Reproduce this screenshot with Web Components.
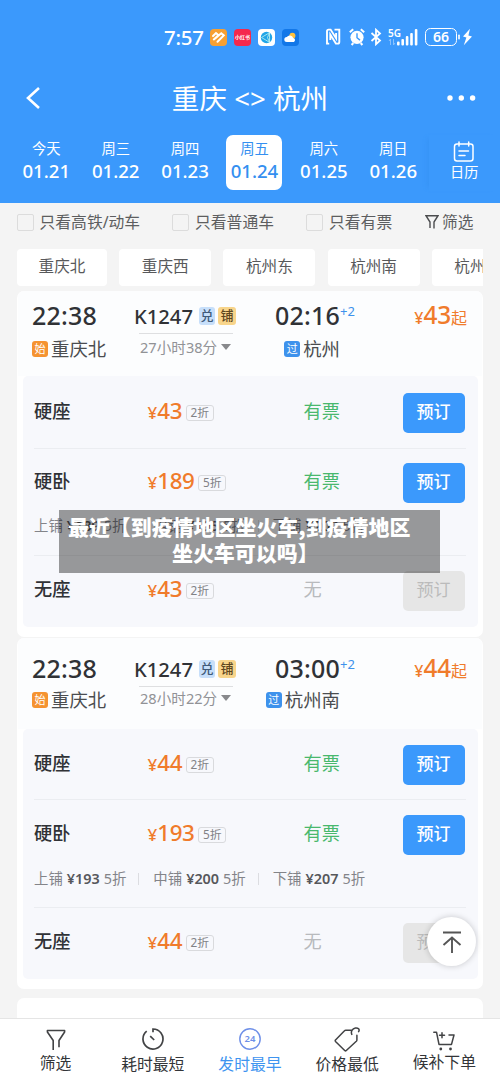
<!DOCTYPE html>
<html lang="zh-CN">
<head>
<meta charset="utf-8">
<title>重庆 - 杭州</title>
<style>
html,body{margin:0;height:1083px;overflow:hidden}
body{font-family:"Noto Sans","Noto Sans CJK SC",sans-serif;background:#f4f4f4;color:#303236}
</style>
</head>
<body>
<train-app></train-app>
<script>
const BASE = `*{box-sizing:border-box}svg{display:block;flex:none}span{white-space:nowrap}`;
function define(name, html, init) {
  const t = document.createElement('template');
  t.innerHTML = html.replace('<style>', '<style>' + BASE);
  customElements.define(name, class extends HTMLElement {
    constructor() {
      super();
      this.attachShadow({mode: 'open'});
    }
    connectedCallback() {
      if (this.shadowRoot.childNodes.length) return;
      const frag = t.content.cloneNode(true);
      frag.querySelectorAll('[data-t]').forEach(e => { e.textContent = this.getAttribute(e.dataset.t) || ''; });
      if (init) init(this, frag);
      this.shadowRoot.append(frag);
    }
  });
}

define('status-bar', `<style>
:host{display:flex;height:74px;padding-left:164px;align-items:center;color:#fff}
.time{width:46px;font-size:20.4px;line-height:26px;letter-spacing:-.2px;font-weight:500}
.app{width:17px;height:17px;border-radius:4px;margin-right:7px;flex:none;overflow:hidden}
.red{background:#f5284d;font-size:5px;line-height:17px;text-align:center;font-weight:700}
.net{display:grid;width:13px;font-size:10px;line-height:10px;font-weight:600;height:19px;flex:none}
.bat{width:32px;height:18px;border:1.5px solid #fff;border-radius:5.5px;font-size:14px;line-height:15px;font-weight:600;text-align:center;flex:none}
</style>
<span class="time">7:57</span>
<svg class="app" viewBox="0 0 17 17"><rect width="17" height="17" fill="#f7a033"/><path d="M3 7l3-3 2.5 2.2M5.2 9.4l6-5.2 2.6 2.2-6.3 6.4M7.8 6.8l-4 3.6" fill="none" stroke="#fff" stroke-width="2" stroke-linecap="round"/></svg>
<span class="app red">小红书</span>
<svg class="app" viewBox="0 0 17 17"><rect width="17" height="17" fill="#fff"/><circle cx="8.5" cy="8.5" r="5.7" fill="#21a5e8"/><path d="M3.5 8.5l8-4.8v9.6zM11.5 3.7l-2 4.8 2 4.8" fill="none" stroke="#c3f4ef" stroke-width=".8"/></svg>
<svg class="app" style="margin-right:26px" viewBox="0 0 17 17"><rect width="17" height="17" fill="#1277e8"/><circle cx="10.4" cy="6.8" r="3" fill="#ffc13c"/><path d="M4.8 13a2.5 2.5 0 010-5 3.6 3.6 0 016.4 1 2.1 2.1 0 01.6 4z" fill="#fff"/></svg>
<svg width="40" height="18" viewBox="0 0 40 18" fill="none" stroke="#fff"><path d="M4.2 15.6H2V3.2Q2 1.6 3.6 1.6h2l5.5 8.6V5M5.3 12V6.6l5.6 9h1.8q1.6 0 1.6-1.6V1.6H9.5" stroke-width="1.9"/><circle cx="32" cy="9.3" r="6.6" fill="#fff" stroke="none"/><path d="M24.8 4.2l3.4-3M39.2 4.2l-3.4-3M26.6 17l1.7-2M37.4 17l-1.7-2" stroke-width="2"/><path d="M32 5.3v4.4l3 2.4" stroke="#3b99fc" stroke-width="1.4"/></svg>
<svg width="12" height="18" viewBox="0 0 12 18" style="margin-left:5px;margin-right:6px" fill="none" stroke="#fff" stroke-width="1.8"><path d="M1.5 5l8.5 7.5L6 16.2V1.8l4 3.7L1.5 13"/></svg>
<span class="net"><span>5G</span><svg width="10" height="8" viewBox="0 0 10 8" opacity=".4" stroke="#fff" fill="none"><path d="M2.5 7V1L1 3M5.5 1v6L7 5"/></svg></span>
<svg width="21" height="18" viewBox="0 0 21 18" fill="#fff" style="margin-left:-4px;margin-right:7px"><rect y="13.5" width="2.6" height="4" rx="1"/><rect x="4.4" y="11" width="2.6" height="6.5" rx="1"/><rect x="8.8" y="8" width="2.6" height="9.5" rx="1"/><rect x="13.2" y="5" width="2.6" height="12.5" rx="1"/><rect x="17.8" y="1" width="2.6" height="16.5" rx="1"/></svg>
<span class="bat">66</span>
<svg width="16" height="18" viewBox="0 0 16 18" fill="#fff"><rect x="1.2" y="6.5" width="1.6" height="5" rx=".7"/><path d="M13 .8L6 8.6l3.4 1L6.8 17.2 15 8.4l-3.6-1z"/></svg>`);

define('title-bar', `<style>
:host{display:grid;grid-template-columns:100px 1fr 100px;height:48px;align-items:center;color:#fff}
svg.b{margin-left:24px}
span{font-size:27.6px;line-height:40px;text-align:center}
svg.m{justify-self:end;margin-right:24px}
</style>
<svg class="b" width="18" height="24" viewBox="0 0 18 24" fill="none" stroke="#fff" stroke-width="2.6"><path d="M15 2L4 12l11 10"/></svg>
<span><slot></slot></span>
<svg class="m" width="30" height="8" viewBox="0 0 30 8" fill="#fff"><circle cx="4" cy="4" r="2.7"/><circle cx="15.3" cy="4" r="2.7"/><circle cx="26.6" cy="4" r="2.7"/></svg>`);

define('date-tab', `<style>
:host{display:grid;width:56px;height:55px;margin-right:13.4px;padding-top:3px;border-radius:7px;text-align:center;color:#fff;grid-template-rows:21px 23px;flex:none}
:host([selected]){background:#fff;color:#348ff0}
.d{font-size:14.3px;line-height:21px}
.n{font-size:18.6px;line-height:23px;font-weight:500}
</style><span class="d" data-t="day"></span><span class="n" data-t="date"></span>`);

define('calendar-link', `<style>
:host{display:grid;width:70px;height:56px;justify-items:center;color:#fff;padding-top:6px;grid-template-rows:20px 22px;box-shadow:-5px 0 5px -4px #2c89ec66}
span{font-size:14.2px;line-height:22px}
</style><svg width="22" height="22" viewBox="0 0 22 22" fill="none" stroke="#fff" stroke-width="1.5" stroke-linecap="round"><rect x="1.5" y="3" width="18.5" height="17" rx="2.5"/><path d="M6 1v4M15.7 1v4M6 10h9.5M6 14.5h6"/></svg><span>日历</span>`);

define('check-filter', `<style>
:host{display:flex;align-items:center;font-size:15.8px;line-height:24px;color:#5d5e60}
i{width:17px;height:17px;border:1.4px solid #dcdcdc;border-radius:2px;margin-right:6px;flex:none}
</style><i></i><span><slot></slot></span>`);

define('filter-link', `<style>
:host{display:flex;align-items:center;font-size:15.7px;line-height:24px;color:#5d5e60}
</style><svg width="14" height="16" viewBox="0 0 14 16" fill="none" stroke="#4b4c4e" stroke-width="1.4" style="margin-right:3px"><path d="M5 14V8L1 1.7h12L9 8v6.5"/></svg><span>筛选</span>`);

define('station-chip', `<style>
:host{display:block;flex:none;width:92px;height:37px;background:#fff;border-radius:4px;text-align:center;font-size:15.6px;line-height:35px;color:#58595b}
</style><span><slot></slot></span>`);

define('train-head', `<style>
:host{display:grid;grid-template-columns:102px 122px 86px 1fr;height:var(--hh);padding:var(--hp) 15px 0 14px;margin:0 1px;background:#fcfdfe;border-radius:6px 6px 0 0}
.time{display:block;font-size:25px;line-height:34px;height:34px;font-weight:500;letter-spacing:.2px;margin-top:-1px}
.st{display:flex;align-items:center;height:24px;margin-top:calc(var(--sg) + 1px);font-size:18.4px;line-height:24px;color:#4b4d50}
b{display:block;width:16px;height:16px;border-radius:3px;background:#f59331;color:#fff;font-size:11px;font-weight:400;line-height:16px;text-align:center;margin-right:3px;flex:none}
.arr b{background:#3e92ec}
.no{display:flex;align-items:center;height:34px;font-size:20.2px;line-height:28px;font-weight:500}
.no span{width:65px}
.no em{font-style:normal;height:18px;width:16px;border-radius:3px;background:#c7dffa;color:#405a79;font-size:13px;line-height:17px;text-align:center;margin-right:3px;flex:none}
.no em+em{width:18px;background:#f8d58b;color:#5e471f;margin:0}
.ln{height:2px;border-top:1px solid #dedfe1;margin:0 3px 0 5px;width:94px}
.dur{display:flex;align-items:center;font-size:14.6px;line-height:22px;color:#919296;margin:var(--dg) 0 0 6px;gap:4px}
.arr{display:grid;justify-items:end;width:84px;align-content:start}
.arr .time{position:relative}
sup{position:absolute;left:100%;top:4px;font-size:13px;line-height:18px;color:#3e92ec;font-weight:400;letter-spacing:0}
.price{color:#f07b2b;height:34px;line-height:34px;text-align:right;font-size:16px;font-weight:400;margin-top:-1px}
.price big{font-size:24.4px;font-weight:500;letter-spacing:-.2px}
.price span{font-weight:500}
</style>
<div><span class="time" data-t="dep"></span><div class="st"><b>始</b><span data-t="from"></span></div></div>
<div><div class="no"><span data-t="no"></span><em>兑</em><em>铺</em></div><div class="ln"></div><div class="dur"><span data-t="dur"></span><svg width="10" height="6" viewBox="0 0 10 6" fill="#88898c"><path d="M0 0h10L5 6z"/></svg></div></div>
<div class="arr"><span class="time"><span data-t="arr"></span><sup>+2</sup></span><div class="st"><b>过</b><span data-t="to"></span></div></div>
<div class="price"><span>¥</span><big data-t="price"></big>起</div>`);

define('seat-row', `<style>
:host{display:block;margin:0 11.5px;height:var(--h,70px);border-bottom:1px solid #ebedf1}
:host([last]){border:0}
.r{display:grid;grid-template-columns:113.5px 156px 99px 62px;height:var(--rh,72px);align-items:center}
.n{font-size:18.2px;line-height:28px;font-weight:500;margin-top:-4px}
.p{display:flex;align-items:center;color:#f07b2b;font-weight:500;font-size:17px;line-height:30px;margin-top:-4px}
.p big{font-size:22.4px;line-height:30px;letter-spacing:-.4px}
.p i{font-style:normal;font-weight:400;color:#818286;border:1px solid #d9dadd;border-radius:3px;width:28.5px;height:16px;font-size:11.8px;line-height:13px;text-align:center;margin:3px 0 0 3.5px}
.y{padding-top:3px}
.s{font-size:18.2px;line-height:28px;color:#49b86d;margin-top:-4px}
.btn{height:40px;border-radius:5px;background:#3b99fc;color:#fff;text-align:center;font-size:17px;line-height:38px;font-weight:500}
:host([none]) .s{color:#b8babd}
:host([none]) .btn{background:#e6e6e6;color:#bbb;font-weight:400}
</style>
<div class="r"><span class="n" data-t="name"></span><div class="p"><span class="y">¥</span><big data-t="price"></big><i data-t="off"></i></div><span class="s"></span><span class="btn">预订</span></div>
<slot></slot>`, (h, f) => { f.querySelector('.s').textContent = h.hasAttribute('none') ? '无' : '有票'; });

define('berth-line', `<style>
:host{display:flex;align-items:center;font-size:14.4px;line-height:20px;color:#838489;margin-top:-1px}
:host div{display:flex;gap:4px}
b{font-weight:600;color:#56575b}
i{width:1px;height:12px;background:#dcdde1;margin:0 14px 0 12px}
</style>
<div><span>上铺</span><b data-t="a"></b><span>5折</span></div><i></i><div><span>中铺</span><b data-t="b"></b><span>5折</span></div><i></i><div><span>下铺</span><b data-t="c"></b><span>5折</span></div>`);

define('train-card', `<style>
:host{display:block;background:#fff;border-radius:7px;margin:0 17px;height:var(--ch);flex:none}
.panel{margin:0 5.5px;background:#f7f8fc;border-radius:5px;height:var(--ph);overflow:hidden}
</style><slot name="head"></slot><div class="panel"><slot></slot></div>`);

define('tab-item', `<style>
:host{display:grid;grid-template-rows:28px 22px;justify-items:center;align-items:center;align-content:start;font-size:15.8px;line-height:22px;color:#333538}
:host([active]){color:#3e94f0}
</style><slot></slot><span data-t="label"></span>`);

define('tab-bar', `<style>
:host{display:grid;grid-template-columns:repeat(5,97.2px);padding:6px 7px 0;height:65px;background:#fff;border-top:1px solid #e5e5e5;flex:none}
text{font:600 9.5px "Noto Sans",sans-serif}
</style>
<tab-item label="筛选" style="margin-top:-1px"><svg style="margin-top:4px" width="20" height="22" viewBox="0 0 20 22" fill="none" stroke="#424345" stroke-width="1.6" stroke-linejoin="round"><path d="M7.2 21v-9.5L1.4 3V1.5h17.2V3L13 11.5v6.7"/></svg></tab-item>
<tab-item label="耗时最短"><svg width="24" height="24" viewBox="0 0 24 24" fill="none" stroke="#424345" stroke-width="1.7"><path d="M12 5.2V2a10 10 0 11-6.3 2.2M9.2 9.2l4 3.8"/></svg></tab-item>
<tab-item label="发时最早" active><svg width="24" height="24" viewBox="0 0 24 24"><circle cx="12" cy="12" r="10.2" fill="none" stroke="#6e8fe8" stroke-width="1.4"/><text x="12" y="15.4" text-anchor="middle" fill="#6e8fe8">24</text></svg></tab-item>
<tab-item label="价格最低"><svg width="26" height="26" viewBox="0 0 26 26" fill="none" stroke="#424345" stroke-width="1.5" stroke-linejoin="round" stroke-linecap="round"><path d="M17.5 4.2h-5.8q-.7 0-1.2.6l-9 9.2q-.6.8 0 1.5l9.2 9q.8.7 1.6 0l10-9.3q.6-.6.6-1.3V9.2M17.8 8.4c-1.2-2.6.4-5.8 3.6-6.4 2.8-.4 4.6 1.5 3.2 3.6"/></svg></tab-item>
<tab-item label="候补下单" style="margin-top:-2px"><svg width="22" height="20" viewBox="0 0 22 20" fill="none" stroke="#424345" stroke-width="1.5" stroke-linejoin="round" stroke-linecap="round" style="margin-top:7px"><path d="M.8 1.2h2.7L6 13.4h12.5L21 4h-5M6.5 4.3h5M9 1.8v5"/><g fill="#424345" stroke="none"><circle cx="7.8" cy="18" r="1.4"/><circle cx="17.5" cy="18" r="1.4"/></g></svg></tab-item>`);

define('top-button', `<style>
:host{position:absolute;left:427px;top:917px;width:49px;height:49px;border-radius:50%;background:#fff;box-shadow:0 0 6px #0003;display:grid;place-items:center}
</style><svg width="20" height="24" viewBox="0 0 20 24" fill="none" stroke="#555" stroke-width="1.9"><path d="M1 2.5h18M10 23V8M1.5 15L10 7.5l8.5 7.5"/></svg>`);

define('caption-overlay', `<style>
:host{position:absolute;left:59px;top:510px;width:381px;height:63px;background:rgba(0,0,0,.39);color:#fff;font:800 20.95px/26px "Noto Sans CJK SC",sans-serif;padding-top:3px}
span{display:block;padding-left:9px}
span+span{padding-left:113px}
</style><span>最近【到疫情地区坐火车,到疫情地区</span><span>坐火车可以吗】</span>`);

define('train-app', `<style>
:host{display:flex;flex-direction:column;position:relative;width:500px;height:1083px;overflow:hidden}
header{background:#3b99fc;height:203px;flex:none}
.dates{display:flex;padding:13px 0 0 18.3px}
.filters{display:flex;height:38px;align-items:center;padding-left:16.5px;flex:none}
.chips{display:flex;gap:12.2px;margin:8px 17px 0;height:37px;overflow:hidden;flex:none}
.list{display:flex;flex-direction:column;flex:1;min-height:0;overflow:hidden;padding-top:5px}
</style>
<header><status-bar></status-bar><title-bar>重庆 &lt;&gt; 杭州</title-bar>
<div class="dates"><date-tab day="今天" date="01.21"></date-tab><date-tab day="周三" date="01.22"></date-tab><date-tab day="周四" date="01.23"></date-tab><date-tab day="周五" date="01.24" selected></date-tab><date-tab day="周六" date="01.25"></date-tab><date-tab day="周日" date="01.26" style="margin-right:8px"></date-tab><calendar-link></calendar-link></div></header>
<div class="filters"><check-filter style="width:155.5px">只看高铁/动车</check-filter><check-filter style="width:134px">只看普通车</check-filter><check-filter style="width:119px">只看有票</check-filter><filter-link></filter-link></div>
<div class="chips"><station-chip style="width:90px">重庆北</station-chip><station-chip>重庆西</station-chip><station-chip>杭州东</station-chip><station-chip>杭州南</station-chip><station-chip>杭州西</station-chip></div>
<div class="list">
<train-card style="--ch:346px;--ph:251px;--hh:85px;--hp:8px;--sg:4px;--dg:1px"><train-head slot="head" dep="22:38" from="重庆北" no="K1247" dur="27小时38分" arr="02:16" to="杭州" price="43"></train-head>
<seat-row style="--h:73px;--rh:74px" name="硬座" price="43" off="2折"></seat-row><seat-row style="--h:107px;--rh:68px" name="硬卧" price="189" off="5折"><berth-line a="¥189" b="¥195" c="¥202"></berth-line></seat-row><seat-row last none style="--rh:70px" name="无座" price="43" off="2折"></seat-row></train-card>
<train-card style="--ch:351px;--ph:250px;--hh:91px;--hp:14px;--sg:2px;--dg:-1px;margin-top:1px"><train-head slot="head" dep="22:38" from="重庆北" no="K1247" dur="28小时22分" arr="03:00" to="杭州南" price="44"></train-head>
<seat-row style="--h:71px" name="硬座" price="44" off="2折"></seat-row><seat-row style="--h:108px;--rh:70px" name="硬卧" price="193" off="5折"><berth-line a="¥193" b="¥200" c="¥207"></berth-line></seat-row><seat-row last none style="--rh:70px" name="无座" price="44" off="2折"></seat-row></train-card>
<train-card style="--ch:40px;--ph:0;margin-top:9px"></train-card>
</div>
<tab-bar></tab-bar><caption-overlay></caption-overlay><top-button></top-button>`);
</script>
</body>
</html>
